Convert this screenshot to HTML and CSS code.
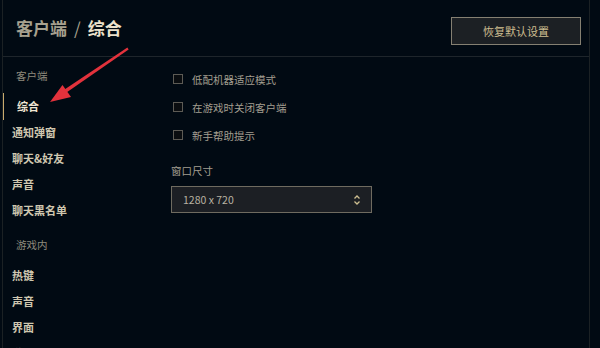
FILE: index.html
```html
<!DOCTYPE html>
<html lang="zh">
<head>
<meta charset="utf-8">
<title>设置</title>
<link rel="stylesheet" href="styles.css">
</head>
<body>
<div class="app">
  <header class="header">
    <h1 class="title"><span class="crumb">客户端</span><span class="sep">/</span><span class="current">综合</span></h1>
    <button class="reset">恢复默认设置</button>
  </header>
  <div class="main">
    <nav class="sidebar">
      <div class="group-label">客户端</div>
      <div class="nav-item selected">综合</div>
      <div class="nav-item">通知弹窗</div>
      <div class="nav-item">聊天&amp;好友</div>
      <div class="nav-item">声音</div>
      <div class="nav-item">聊天黑名单</div>
      <div class="group-label second">游戏内</div>
      <div class="nav-item">热键</div>
      <div class="nav-item">声音</div>
      <div class="nav-item">界面</div>
      <div class="nav-item">游戏</div>
    </nav>
    <section class="content">
      <label class="check-row"><span class="box"></span><span>低配机器适应模式</span></label>
      <label class="check-row"><span class="box"></span><span>在游戏时关闭客户端</span></label>
      <label class="check-row"><span class="box"></span><span>新手帮助提示</span></label>
      <div class="field-label">窗口尺寸</div>
      <div class="select">
        <span>1280 x 720</span>
        <svg class="updown" width="8" height="12" viewBox="0 0 8 12"><path d="M1.5 4.5 L4 2 L6.5 4.5 M1.5 7.5 L4 10 L6.5 7.5" fill="none" stroke="#cdbe91" stroke-width="1.3"/></svg>
      </div>
    </section>
  </div>
  <svg class="annot" width="600" height="348" viewBox="0 0 600 348">
    <polygon points="128.6,49.4 127.4,47.6 64.5,89.6 66.5,92.4" fill="#e2323c"/>
    <polygon points="50,102 62.5,85 71,97" fill="#e2323c"/>
  </svg>
</div>
</body>
</html>
```
FILE: styles.css
```css
* { box-sizing: border-box; }
html, body { margin: 0; padding: 0; }
body {
  background: #010a13;
  width: 600px;
  height: 348px;
  overflow: hidden;
  font-family: "Noto Sans CJK SC", "Noto Sans", sans-serif;
}
.app {
  margin-left: 2px;
  width: 588px;
  height: 348px;
  border-left: 1px solid #1b2124;
  border-right: 1px solid #1b2124;
  display: flex;
  flex-direction: column;
  overflow: hidden;
}
.header {
  height: 57px;
  border-bottom: 1px solid #1e252b;
  display: flex;
  align-items: flex-start;
  justify-content: space-between;
  padding: 0 8px 0 13px;
  flex: none;
}
.title {
  margin: 17px 0 0;
  font-size: 17px;
  line-height: 22px;
  font-weight: 700;
  display: flex;
  gap: 6px;
}
.crumb { color: #a7a18f; }
.sep { color: #a7a18f; font-weight: 400; margin: 0 1px; }
.current { color: #ece2cc; }
.reset {
  margin-top: 17px;
  width: 130px;
  height: 28px;
  background: #1c2024;
  border: 1px solid #858072;
  color: #cdbe91;
  font-family: inherit;
  font-size: 11px;
  padding: 0;
}
.main {
  flex: 1;
  display: flex;
  min-height: 0;
}
.sidebar {
  width: 168px;
  flex: none;
  padding-top: 8px;
}
.group-label {
  font-size: 10.5px;
  line-height: 22px;
  color: #8f8a7d;
  padding-left: 13px;
  margin-bottom: 6px;
}
.group-label.second { margin-top: 11px; }
.nav-item {
  position: relative;
  font-size: 11px;
  font-weight: 700;
  line-height: 26px;
  height: 26px;
  color: #cfc7b0;
  padding-left: 9px;
}
.nav-item.selected {
  color: #f0e6d2;
  padding-left: 14px;
}
.nav-item.selected::before {
  content: "";
  position: absolute;
  left: -1px;
  top: 0;
  width: 2px;
  height: 27px;
  background: #c8aa6e;
}
.content {
  flex: 1;
  padding-top: 8px;
}
.check-row {
  display: flex;
  align-items: center;
  height: 28px;
  font-size: 10.5px;
  color: #a39e90;
}
.box {
  width: 10px;
  height: 10px;
  border: 1px solid #5d5b55;
  background: #0a0d10;
  margin: 0 9px 0 2px;
}
.field-label {
  margin-top: 13px;
  font-size: 10.5px;
  line-height: 18px;
  color: #a39e90;
}
.select {
  margin-top: 6px;
  width: 201px;
  height: 27px;
  border: 1px solid #6f6b60;
  background: #1c1f24;
  display: flex;
  align-items: center;
  justify-content: space-between;
  padding: 0 10px 0 11px;
  font-size: 10.5px;
  color: #b8b2a2;
}
.updown { display: block; }
.annot {
  position: absolute;
  left: 0;
  top: 0;
  pointer-events: none;
}
```
